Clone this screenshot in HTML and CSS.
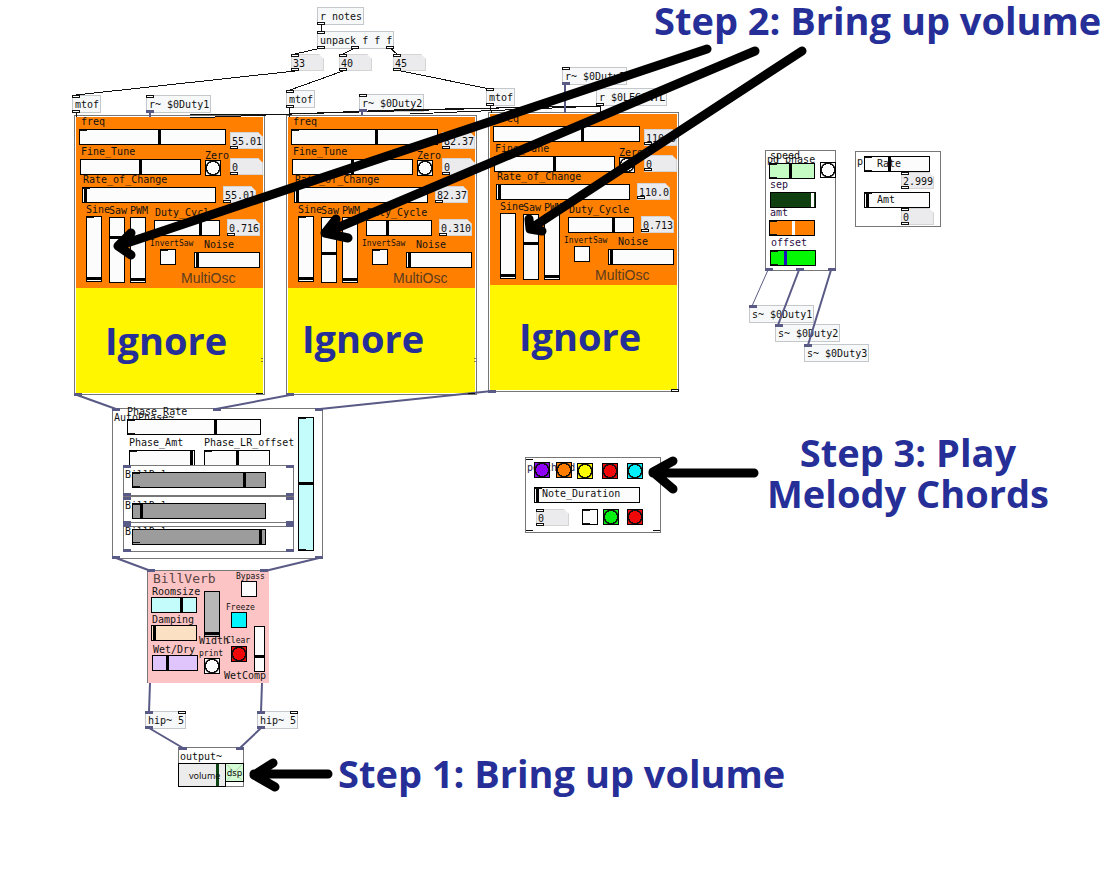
FILE: index.html
```html
<!DOCTYPE html>
<html lang="en">
<head>
<meta charset="utf-8">
<meta name="viewport" content="width=device-width, initial-scale=1">
<title>MultiOsc patch</title>
<link rel="stylesheet" href="styles.css">
</head>
<body>
<main class="patch">

<div class="obj notes">r notes</div>
<div class="obj unpack">unpack f f f</div>
<input class="num note-a" aria-label="Note 1" value="33">
<input class="num note-b" aria-label="Note 2" value="40">
<input class="num note-c" aria-label="Note 3" value="45">
<div class="obj mtof-a">mtof</div>
<div class="obj mtof-b">mtof</div>
<div class="obj mtof-c">mtof</div>
<div class="obj recv-a">r~ $0Duty1</div>
<div class="obj recv-b">r~ $0Duty2</div>
<div class="obj recv-c">r~ $0Duty3</div>
<div class="obj recv-l">r $0LEGCNTL</div>

<section class="osc osc-a">
  <div class="osc-face"></div><div class="osc-cover"></div>
  <label class="l-freq" for="a1">freq</label><input id="a1" class="hs s-freq" type="range" step="any" value="54.8">
  <input class="num n-freq" aria-label="Frequency value" value="55.01">
  <label class="l-fine" for="a2">Fine_Tune</label><input id="a2" class="hs s-fine" type="range" step="any" value="50">
  <label class="l-zero" for="a3">Zero</label><button id="a3" class="bang b-zero" aria-label="Zero"></button>
  <input class="num n-fine" aria-label="Fine tune value" value="0">
  <label class="l-rate" for="a4">Rate_of_Change</label><input id="a4" class="hs s-rate" type="range" step="any" value="1">
  <input class="num n-rate" aria-label="Rate value" value="55.01">
  <label class="l-sine" for="a5">Sine</label><input id="a5" class="vs s-sine" type="range" step="any" value="2">
  <label class="l-saw" for="a6">Saw</label><input id="a6" class="vs s-saw" type="range" step="any" value="71">
  <label class="l-pwm" for="a7">PWM</label><input id="a7" class="vs s-pwm" type="range" step="any" value="2">
  <label class="l-duty" for="a8">Duty_Cycle</label><input id="a8" class="hs s-duty" type="range" step="any" value="72">
  <input class="num n-duty" aria-label="Duty value" value="0.716">
  <label class="tiny l-inv" for="a9">InvertSaw</label><input id="a9" class="tgl t-inv" type="checkbox">
  <label class="l-noise" for="a10">Noise</label><input id="a10" class="hs s-noise" type="range" step="any" value="2">
  <h2 class="osc-name">MultiOsc</h2>
  <p class="big ignore">Ignore</p>
</section>

<section class="osc osc-b">
  <div class="osc-face"></div><div class="osc-cover"></div>
  <label class="l-freq" for="b1">freq</label><input id="b1" class="hs s-freq" type="range" step="any" value="58.5">
  <input class="num n-freq" aria-label="Frequency value" value="82.37">
  <label class="l-fine" for="b2">Fine_Tune</label><input id="b2" class="hs s-fine" type="range" step="any" value="50">
  <label class="l-zero" for="b3">Zero</label><button id="b3" class="bang b-zero" aria-label="Zero"></button>
  <input class="num n-fine" aria-label="Fine tune value" value="0">
  <label class="l-rate" for="b4">Rate_of_Change</label><input id="b4" class="hs s-rate" type="range" step="any" value="1">
  <input class="num n-rate" aria-label="Rate value" value="82.37">
  <label class="l-sine" for="b5">Sine</label><input id="b5" class="vs s-sine" type="range" step="any" value="2">
  <label class="l-saw" for="b6">Saw</label><input id="b6" class="vs s-saw" type="range" step="any" value="45">
  <label class="l-pwm" for="b7">PWM</label><input id="b7" class="vs s-pwm" type="range" step="any" value="2">
  <label class="l-duty" for="b8">Duty_Cycle</label><input id="b8" class="hs s-duty" type="range" step="any" value="31">
  <input class="num n-duty" aria-label="Duty value" value="0.310">
  <label class="tiny l-inv" for="b9">InvertSaw</label><input id="b9" class="tgl t-inv" type="checkbox">
  <label class="l-noise" for="b10">Noise</label><input id="b10" class="hs s-noise" type="range" step="any" value="2">
  <h2 class="osc-name">MultiOsc</h2>
  <p class="big ignore">Ignore</p>
</section>

<section class="osc osc-c">
  <div class="osc-face"></div><div class="osc-cover"></div>
  <label class="l-freq" for="c1">freq</label><input id="c1" class="hs s-freq" type="range" step="any" value="61">
  <input class="num n-freq" aria-label="Frequency value" value="110.0">
  <label class="l-fine" for="c2">Fine_Tune</label><input id="c2" class="hs s-fine" type="range" step="any" value="50">
  <label class="l-zero" for="c3">Zero</label><button id="c3" class="bang b-zero" aria-label="Zero"></button>
  <input class="num n-fine" aria-label="Fine tune value" value="0">
  <label class="l-rate" for="c4">Rate_of_Change</label><input id="c4" class="hs s-rate" type="range" step="any" value="1">
  <input class="num n-rate" aria-label="Rate value" value="110.0">
  <label class="l-sine" for="c5">Sine</label><input id="c5" class="vs s-sine" type="range" step="any" value="2">
  <label class="l-saw" for="c6">Saw</label><input id="c6" class="vs s-saw" type="range" step="any" value="55">
  <label class="l-pwm" for="c7">PWM</label><input id="c7" class="vs s-pwm" type="range" step="any" value="2">
  <label class="l-duty" for="c8">Duty_Cycle</label><input id="c8" class="hs s-duty" type="range" step="any" value="70">
  <input class="num n-duty" aria-label="Duty value" value="0.713">
  <label class="tiny l-inv" for="c9">InvertSaw</label><input id="c9" class="tgl t-inv" type="checkbox">
  <label class="l-noise" for="c10">Noise</label><input id="c10" class="hs s-noise" type="range" step="any" value="2">
  <h2 class="osc-name">MultiOsc</h2>
  <p class="big ignore">Ignore</p>
</section>

<section class="frame autophase">
  <span class="txt ap-name">AutoPhase~</span>
  <label class="ap-l1" for="p1">Phase_Rate</label><input id="p1" class="hs ap-s1" type="range" step="any" value="66.5">
  <label class="ap-l2" for="p2">Phase_Amt</label><input id="p2" class="hs ap-s2" type="range" step="any" value="98">
  <label class="ap-l3" for="p3">Phase_LR_offset</label><input id="p3" class="hs ap-s3" type="range" step="any" value="50">
  <div class="frame sub sub-a"><label for="p4">BillDel~</label><input id="p4" class="hs grey" type="range" step="any" value="85"></div>
  <div class="frame sub sub-b"><label for="p5">BillDel~</label><input id="p5" class="hs grey" type="range" step="any" value="5.5"></div>
  <div class="frame sub sub-c"><label for="p6">BillDel~</label><input id="p6" class="hs grey" type="range" step="any" value="98"></div>
  <input class="vs ap-mix" aria-label="Phase mix" type="range" step="any" value="50.5">
</section>

<section class="verb">
  <h2 class="verb-name">BillVerb</h2>
  <label class="v-l1" for="v1">Roomsize</label><input id="v1" class="hs v-s1" type="range" step="any" value="68">
  <label class="v-l2" for="v2">Damping</label><input id="v2" class="hs v-s2" type="range" step="any" value="3">
  <label class="v-l3" for="v3">Wet/Dry</label><input id="v3" class="hs v-s3" type="range" step="any" value="31">
  <label class="v-l4" for="v4">Width</label><input id="v4" class="vs v-s4" type="range" step="any" value="3">
  <label class="tiny v-l5" for="v5">print</label><button id="v5" class="bang v-print" aria-label="print"></button>
  <label class="tiny v-l6" for="v6">Bypass</label><input id="v6" class="tgl v-bypass" type="checkbox">
  <label class="tiny v-l7" for="v7">Freeze</label><input id="v7" class="tgl v-freeze" type="checkbox">
  <label class="tiny v-l8" for="v8">Clear</label><button id="v8" class="bang red v-clear" aria-label="Clear"></button>
  <label class="v-l9" for="v9">WetComp</label><input id="v9" class="vs v-comp" type="range" step="any" value="32">
</section>

<div class="obj hip-a">hip~ 5</div>
<div class="obj hip-b">hip~ 5</div>

<section class="frame output">
  <span class="txt out-name">output~</span>
  <input id="vol" class="hs out-vol" type="range" step="any" value="86"><label class="out-label" for="vol">volume</label>
  <button class="out-dsp"><svg viewBox="0 0 18 19" aria-hidden="true"><path d="M1 1L17 18M17 1L1 18"/></svg><span>dsp</span></button>
</section>

<section class="frame phase">
  <label class="ph-l1" for="q1">speed</label><span class="txt ph-name">pd phase</span>
  <input id="q1" class="hs ph-s1" type="range" step="any" value="46"><button class="bang ph-bang" aria-label="Reset phase"></button>
  <label class="ph-l2" for="q2">sep</label><input id="q2" class="hs ph-s2" type="range" step="any" value="97">
  <label class="ph-l3" for="q3">amt</label><input id="q3" class="hs ph-s3" type="range" step="any" value="53">
  <label class="ph-l4" for="q4">offset</label><input id="q4" class="hs ph-s4" type="range" step="any" value="31">
</section>
<div class="obj send-a">s~ $0Duty1</div>
<div class="obj send-b">s~ $0Duty2</div>
<div class="obj send-c">s~ $0Duty3</div>

<section class="frame rate">
  <span class="txt r-name">p</span>
  <input id="r1" class="hs r-s1" type="range" step="any" value="37"><label class="r-l1" for="r1">Rate</label>
  <input class="num r-n1" aria-label="Rate value" value="2.999">
  <input id="r2" class="hs r-s2" type="range" step="any" value="2"><label class="r-l2" for="r2">Amt</label>
  <input class="num r-n2" aria-label="Amount value" value="0">
</section>

<section class="frame chord">
  <span class="txt c-name">pd chord</span>
  <button class="bang c-violet" aria-label="Chord 1"></button>
  <button class="bang c-orange" aria-label="Chord 2"></button>
  <button class="bang c-yellow" aria-label="Chord 3"></button>
  <button class="bang red c-red" aria-label="Chord 4"></button>
  <button class="bang c-cyan" aria-label="Chord 5"></button>
  <input id="nd" class="hs c-dur" type="range" step="any" value="1"><label class="c-lab" for="nd">Note_Duration</label>
  <input class="num c-num" aria-label="Note duration value" value="0">
  <input class="tgl c-tgl" type="checkbox" aria-label="Loop">
  <button class="bang c-green" aria-label="Start"></button>
  <button class="bang red c-stop" aria-label="Stop"></button>
</section>

<svg class="overlay" aria-hidden="true">
  <defs>
    <rect id="io" width="7" height="2" x=".5" y=".5" fill="#fff" stroke="#111"/>
    <rect id="sg" width="8" height="3" fill="#5a5a86"/>
    <path id="tk" d="M0 .5h7" stroke="#111"/>
  </defs>
  <g class="msg">
    <path d="M321 24V32M321 48L295 54M355 48L343 54M390 48L397 54M295 71L76 95M343 71L290 90M401 71L490 89M76 113V117M289 107V117M490 106L492 113M600 106L601 113M600 106L394 110L190 118M600 106L500 108L289 114L190 115M600 106L410 114"/>
  </g>
  <g class="sig">
    <path d="M150 111V117M362 110V115M565 83V113"/>
    <path d="M77 395L116 409M290 395L216 409M492 391L320 409"/>
    <path d="M116 558L151 571M319 558L265 571M150 683L149 712M262 683L261 712M149 728L183 748M261 728L240 748"/>
    <path class="thin" d="M768 270L752 306"/><path d="M799 270L778 325M831 270L808 345"/>
  </g>
  <use href="#io" x="317" y="22"/><use href="#io" x="317" y="31"/><use href="#io" x="317" y="46"/><use href="#io" x="351" y="46"/><use href="#io" x="386" y="46"/>
  <use href="#io" x="291" y="54"/><use href="#io" x="291" y="68"/><use href="#io" x="339" y="54"/><use href="#io" x="339" y="68"/><use href="#io" x="393" y="54"/><use href="#io" x="393" y="68"/>
  <use href="#io" x="72" y="95"/><use href="#io" x="72" y="110"/><use href="#io" x="286" y="90"/><use href="#io" x="286" y="105"/><use href="#io" x="486" y="88"/><use href="#io" x="486" y="103"/>
  <use href="#io" x="146" y="95"/><use href="#io" x="359" y="94"/><use href="#io" x="562" y="67"/><use href="#io" x="596" y="103"/>
  <use href="#sg" x="146" y="110"/><use href="#sg" x="359" y="109"/><use href="#sg" x="562" y="82"/>
  <use href="#io" x="230" y="146"/><use href="#io" x="230" y="172"/><use href="#io" x="223" y="200"/><use href="#io" x="227" y="233"/>
  <use href="#io" x="442" y="146"/><use href="#io" x="442" y="172"/><use href="#io" x="435" y="200"/><use href="#io" x="439" y="233"/>
  <use href="#io" x="644" y="142"/><use href="#io" x="644" y="168"/><use href="#io" x="637" y="196"/><use href="#io" x="641" y="229"/>
  <use href="#tk" x="80" y="130"/><use href="#tk" x="292" y="130"/><use href="#tk" x="494" y="126"/><use href="#tk" x="87" y="217"/><use href="#tk" x="299" y="217"/><use href="#tk" x="501" y="213"/>
  <use href="#tk" x="83" y="188"/><use href="#tk" x="295" y="188"/><use href="#tk" x="497" y="184"/><use href="#tk" x="161" y="250"/><use href="#tk" x="373" y="250"/><use href="#tk" x="575" y="246"/>
  <use href="#tk" x="256" y="393"/><use href="#tk" x="468" y="393"/><use href="#io" x="671" y="389"/>
  <path d="M262 358v4M475 358v4" stroke="#111" stroke-dasharray="1 2"/>
  <use href="#sg" x="74" y="393"/><use href="#sg" x="286" y="393"/><use href="#sg" x="488" y="390"/>
  <use href="#sg" x="112" y="408"/><use href="#sg" x="213" y="408"/><use href="#sg" x="315" y="408"/><use href="#sg" x="112" y="556"/><use href="#sg" x="315" y="556"/>
  <use href="#sg" x="123" y="465"/><use href="#sg" x="286" y="465"/><use href="#sg" x="123" y="493"/><use href="#sg" x="286" y="493"/><use href="#sg" x="123" y="497"/><use href="#sg" x="286" y="497"/><use href="#sg" x="123" y="521"/><use href="#sg" x="286" y="521"/><use href="#sg" x="123" y="524"/><use href="#sg" x="286" y="524"/><use href="#sg" x="123" y="549"/><use href="#sg" x="286" y="549"/>
  <use href="#tk" x="128" y="420"/><use href="#tk" x="128" y="433"/><use href="#tk" x="130" y="451"/><use href="#tk" x="205" y="451"/><use href="#tk" x="133" y="473"/><use href="#tk" x="133" y="486"/><use href="#tk" x="133" y="504"/><use href="#tk" x="133" y="542"/><use href="#tk" x="299" y="418"/><use href="#tk" x="299" y="549"/>
  <use href="#sg" x="147" y="569"/><use href="#sg" x="260" y="569"/>
  <use href="#sg" x="145" y="711"/><use href="#sg" x="257" y="711"/><use href="#io" x="178" y="711"/><use href="#io" x="290" y="711"/><use href="#sg" x="145" y="726"/><use href="#sg" x="257" y="726"/><use href="#sg" x="179" y="747"/><use href="#sg" x="236" y="747"/>
  <use href="#sg" x="765" y="268"/><use href="#sg" x="796" y="268"/><use href="#sg" x="828" y="268"/><use href="#sg" x="749" y="305"/><use href="#sg" x="775" y="324"/><use href="#sg" x="804" y="344"/>
  <use href="#tk" x="770" y="164"/><use href="#tk" x="770" y="177"/><use href="#tk" x="770" y="221"/><use href="#tk" x="770" y="234"/><use href="#tk" x="771" y="251"/><use href="#tk" x="771" y="264"/>
  <use href="#io" x="901" y="172"/><use href="#io" x="901" y="186"/><use href="#io" x="901" y="208"/><use href="#io" x="901" y="222"/><use href="#tk" x="865" y="157"/><use href="#tk" x="865" y="170"/><use href="#tk" x="865" y="193"/>
  <use href="#io" x="536" y="509"/><use href="#io" x="536" y="523"/><use href="#tk" x="526" y="459"/><use href="#tk" x="526" y="530"/><use href="#tk" x="653" y="530"/><use href="#tk" x="535" y="488"/><use href="#tk" x="583" y="510"/><use href="#tk" x="583" y="523"/>
  <g class="arrow">
    <path d="M707 49L118 246M131 233L118 246L131 255"/>
    <path d="M755 51L325 233M336 219L325 233L348 238"/>
    <path d="M802 51L530 229M529 219L530 229L542 231"/>
    <path d="M754 473H653M673 461L653 472L673 489"/>
    <path d="M328 774H254M273 763L254 775L275 787"/>
  </g>
</svg>

<p class="big step-two">Step 2: Bring up volume</p>
<p class="big step-three">Step 3: Play<br>Melody Chords</p>
<p class="big step-one">Step 1: Bring up volume</p>
</main>
</body>
</html>
```
FILE: styles.css
```css
* { box-sizing: border-box; }
body { margin: 0; background: #fff; }

/* The patch is a free canvas: every object keeps its own place on it. */
.patch {
  position: relative;
  min-height: 100vh;
  color: #111;
  font: 10px/12px "DejaVu Sans Mono", "Liberation Mono", monospace;
}
.patch h2, .patch p { margin: 0; }
.obj, .num, .frame, .osc, .verb, .hs, .vs, .tgl, .bang, .txt, .patch label,
.osc-face, .osc-cover, .osc-name, .verb-name, .out-dsp, .big, .overlay { position: absolute; }
.patch label, .txt { white-space: nowrap; }
.patch .tiny { font-size: 8px; line-height: 10px; }

.obj { height: 18px; padding: 3px 2px; border: 1px solid #c4c8ca; background: #f6f8f9; white-space: nowrap; line-height: 12px; }
.num {
  width: 33px; height: 17px; padding: 2px 0 0 1px; border: 1px solid #d4d4d4; border-radius: 0;
  background: #ebebed; color: #111; font: inherit;
  clip-path: polygon(0 0, 28px 0, 100% 5px, 100% 100%, 0 100%);
}
.frame { border: 1px solid #777; }

/* Controls */
.hs, .vs, .tgl, .bang {
  appearance: none; -webkit-appearance: none;
  margin: 0; padding: 0; border: 1px solid #000; border-radius: 0;
  background: #fcfcfc; width: 16px; height: 16px;
}
.vs { writing-mode: vertical-lr; direction: rtl; }
.hs::-webkit-slider-thumb { -webkit-appearance: none; width: 3px; height: 14px; background: var(--knob, #000); }
.vs::-webkit-slider-thumb { -webkit-appearance: none; width: 14px; height: 3px; background: #000; }
.bang { background: radial-gradient(circle, var(--fill, #fcfcfc) 6px, #111 6px, #111 7px, var(--fill, #fcfcfc) 8px); }
.red { --fill: #f00808; }

/* Top objects */
.notes { left: 317px; top: 7px; width: 47px; }
.unpack { left: 317px; top: 31px; width: 77px; }
.note-a { left: 291px; top: 54px; }
.note-b { left: 339px; top: 54px; }
.note-c { left: 393px; top: 54px; }
.mtof-a { left: 72px; top: 95px; width: 29px; }
.mtof-b { left: 286px; top: 90px; width: 29px; }
.mtof-c { left: 486px; top: 88px; width: 29px; }
.recv-a { left: 146px; top: 95px; width: 65px; }
.recv-b { left: 359px; top: 94px; width: 65px; }
.recv-c { left: 562px; top: 67px; width: 65px; }
.recv-l { left: 596px; top: 88px; width: 71px; }

/* Oscillator module */
.osc { width: 191px; height: 280px; border: 1px solid #777; }
.osc-a { left: 74px; top: 115px; }
.osc-b { left: 286px; top: 115px; }
.osc-c { left: 488px; top: 112px; }
.osc-face { left: 1px; top: 1px; width: 187px; height: 172px; background: #ff8000; }
.osc-cover { left: 1px; top: 172px; width: 187px; height: 105px; background: #fff600; }
.l-freq { left: 6px; top: 0; }
.s-freq { left: 4px; top: 13px; width: 147px; }
.n-freq { left: 155px; top: 16px; }
.l-fine { left: 6px; top: 30px; }
.s-fine { left: 5px; top: 43px; width: 121px; }
.l-zero { left: 130px; top: 34px; }
.b-zero { left: 130px; top: 44px; }
.n-fine { left: 155px; top: 42px; }
.l-rate { left: 8px; top: 58px; }
.s-rate { left: 7px; top: 71px; width: 134px; }
.n-rate { left: 148px; top: 70px; }
.l-sine { left: 11px; top: 88px; }
.l-saw { left: 34px; top: 89px; }
.l-pwm { left: 55px; top: 89px; }
.l-duty { left: 80px; top: 91px; }
.s-sine { left: 11px; top: 100px; height: 66px; }
.s-saw { left: 34px; top: 101px; height: 66px; }
.s-pwm { left: 55px; top: 101px; height: 66px; }
.s-duty { left: 79px; top: 104px; width: 66px; }
.n-duty { left: 152px; top: 103px; }
.l-inv { left: 75px; top: 123px; }
.t-inv { left: 85px; top: 133px; }
.l-noise { left: 129px; top: 123px; }
.s-noise { left: 119px; top: 136px; width: 66px; }
.osc-name { left: 106px; top: 154px; font: 14px/16px "Liberation Sans", Arial, sans-serif; color: #5c3c1e; }

/* AutoPhase */
.autophase { left: 112px; top: 408px; width: 211px; height: 151px; }
.ap-name { left: 1px; top: 3px; }
.ap-l1 { left: 14px; top: -3px; }
.ap-s1 { left: 14px; top: 10px; width: 134px; }
.ap-l2 { left: 16px; top: 28px; }
.ap-s2 { left: 16px; top: 41px; width: 66px; }
.ap-l3 { left: 91px; top: 28px; }
.ap-s3 { left: 91px; top: 41px; width: 66px; }
.sub { left: 10px; width: 171px; background: #fff; }
.sub-a { top: 56px; height: 31px; }
.sub-b { top: 87px; height: 27px; }
.sub-c { top: 117px; height: 26px; }
.sub label { left: 1px; top: 3px; }
.sub .grey { left: 8px; top: 6px; width: 134px; background: #9c9c9c; }
.sub-c label { top: -1px; }
.sub-c .grey { top: 2px; }
.ap-mix { left: 185px; top: 8px; height: 134px; background: #c4fcfc; }

/* BillVerb */
.verb { left: 147px; top: 570px; width: 122px; height: 113px; border-left: 1px solid #777; border-top: 1px solid #777; background: #fcc4c4; }
.verb-name { left: 5px; top: 0; font-size: 13px; line-height: 15px; font-weight: normal; color: #5a4444; }
.v-l1 { left: 4px; top: 15px; }
.v-s1 { left: 3px; top: 26px; width: 46px; background: #c4fcfc; }
.v-l2 { left: 4px; top: 43px; }
.v-s2 { left: 3px; top: 54px; width: 46px; background: #fce0c4; }
.v-l3 { left: 5px; top: 73px; }
.v-s3 { left: 4px; top: 84px; width: 46px; background: #e0c4fc; }
.v-l4 { left: 51px; top: 64px; }
.v-s4 { left: 56px; top: 20px; height: 46px; background: #b8b8b8; }
.v-l5 { left: 51px; top: 78px; }
.v-print { left: 56px; top: 87px; }
.v-l6 { left: 88px; top: 1px; }
.v-bypass { left: 93px; top: 10px; }
.v-l7 { left: 78px; top: 32px; }
.v-freeze { left: 83px; top: 41px; background: #00f4fc; }
.v-l8 { left: 78px; top: 65px; }
.v-clear { left: 83px; top: 75px; }
.v-l9 { left: 76px; top: 99px; }
.v-comp { left: 106px; top: 55px; width: 11px; height: 46px; }
.v-comp::-webkit-slider-thumb { width: 9px; }

/* Output */
.hip-a { left: 145px; top: 711px; width: 41px; }
.hip-b { left: 257px; top: 711px; width: 41px; }
.output { left: 178px; top: 747px; width: 66px; height: 40px; }
.out-name { left: 1px; top: 3px; }
.out-vol { --knob: #0c4414; left: -1px; top: 15px; width: 48px; height: 24px; background: #ececec; }
.out-vol::-webkit-slider-thumb { height: 22px; }
.patch .out-label { left: 10px; top: 22px; font: 9px/12px "Noto Sans", "Open Sans", sans-serif; }
.out-dsp { left: 46px; top: 15px; width: 19px; height: 19px; padding: 0; border: 1px solid #000; background: #d4fcd4; color: #111; font: 9px/16px "Noto Sans", "Open Sans", sans-serif; }
.out-dsp svg { position: absolute; left: 0; top: 0; width: 100%; height: 100%; fill: none; stroke: #a8cca8; }
.out-dsp span { position: relative; }

/* Phase */
.phase { left: 765px; top: 150px; width: 71px; height: 121px; }
.phase label { color: #2c0c44; }
.phase .ph-l1 { left: 4px; top: -1px; color: #111; }
.ph-name { left: 1px; top: 3px; }
.ph-s1 { left: 3px; top: 12px; width: 46px; background: #c4fcc4; }
.ph-bang { left: 54px; top: 11px; }
.ph-l2 { left: 4px; top: 28px; }
.ph-s2 { --knob: #fff; left: 4px; top: 41px; width: 46px; background: #104010; }
.ph-l3 { left: 4px; top: 56px; }
.ph-s3 { --knob: #fff; left: 3px; top: 69px; width: 46px; background: #ff8000; }
.ph-l4 { left: 5px; top: 86px; }
.ph-s4 { --knob: #1c10c0; left: 4px; top: 99px; width: 46px; background: #04f804; }
.send-a { left: 749px; top: 305px; width: 65px; }
.send-b { left: 775px; top: 324px; width: 65px; }
.send-c { left: 804px; top: 344px; width: 65px; }

/* Rate */
.rate { left: 855px; top: 151px; width: 86px; height: 76px; }
.r-name { left: 1px; top: 4px; }
.r-s1 { left: 8px; top: 4px; width: 66px; }
.r-l1 { left: 21px; top: 6px; }
.r-n1 { left: 45px; top: 20px; }
.r-s2 { left: 8px; top: 40px; width: 66px; }
.r-l2 { left: 21px; top: 42px; }
.r-n2 { left: 45px; top: 56px; }

/* Chord */
.chord { left: 525px; top: 457px; width: 136px; height: 76px; }
.c-name { left: 1px; top: 4px; color: #1c1c44; }
.c-violet { --fill: #9000f8; left: 8px; top: 4px; }
.c-orange { --fill: #fc7c00; left: 30px; top: 4px; }
.c-yellow { --fill: #fcfc00; left: 51px; top: 5px; }
.c-red { left: 76px; top: 5px; }
.c-cyan { --fill: #00f0fc; left: 101px; top: 5px; }
.c-dur { left: 8px; top: 29px; width: 106px; }
.c-lab { left: 16px; top: 30px; }
.c-num { left: 10px; top: 51px; }
.c-tgl { left: 56px; top: 51px; }
.c-green { --fill: #04f010; left: 77px; top: 51px; }
.c-stop { left: 101px; top: 51px; }

/* Patch cords and pointers */
.overlay { left: 0; top: 0; width: 100%; height: 100%; pointer-events: none; }
.overlay .msg { fill: none; stroke: #111; shape-rendering: crispEdges; }
.overlay .sig { fill: none; stroke: #5a5a86; stroke-width: 2; }
.overlay .thin { stroke-width: 1; }
.overlay .arrow { fill: none; stroke: #000; stroke-width: 9; stroke-linecap: round; stroke-linejoin: round; }

/* Annotations */
.big { font: bold 38px/41px "Open Sans", "Noto Sans", sans-serif; color: #262f98; white-space: nowrap; }
.ignore { left: 30px; top: 204px; }
.osc-b .ignore { left: 15px; top: 202px; }
.osc-c .ignore { left: 30px; top: 203px; }
.step-one { left: 338px; top: 753px; }
.step-two { left: 654px; top: 0; }
.step-three { left: 767px; top: 432px; text-align: center; }
```
